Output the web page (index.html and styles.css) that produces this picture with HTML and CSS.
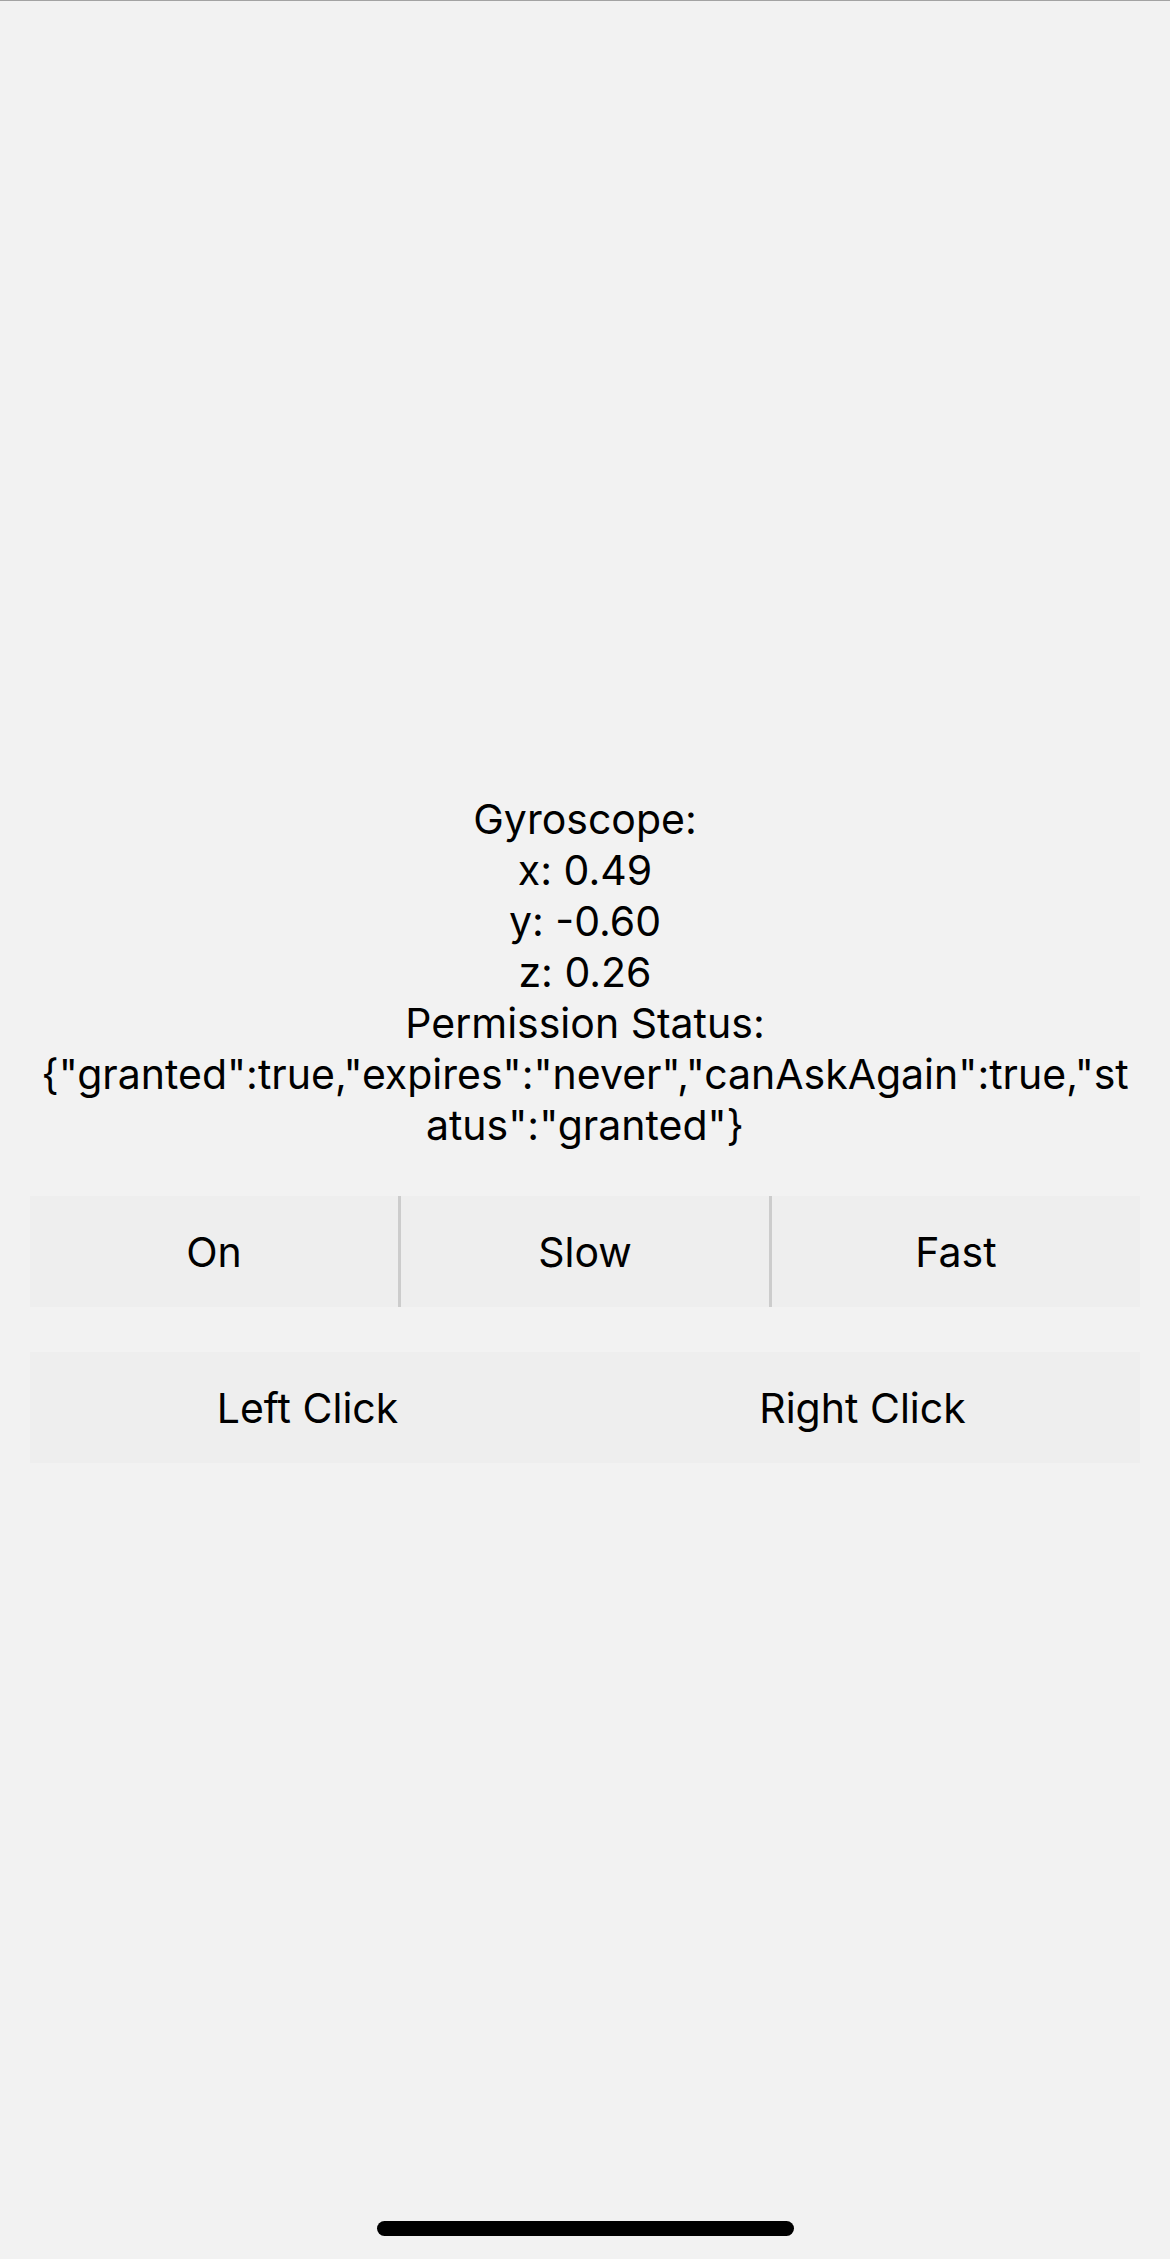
FILE: index.html
```html
<!DOCTYPE html>
<html lang="en">
<head>
<meta charset="utf-8">
<title>Gyroscope</title>
<link rel="stylesheet" href="styles.css">
</head>
<body>
<div class="screen">
  <main class="content">
    <div class="readout">
      <div class="line">Gyroscope:</div>
      <div class="line">x: 0.49</div>
      <div class="line">y: -0.60</div>
      <div class="line">z: 0.26</div>
      <div class="line">Permission Status:</div>
      <div class="line">{"granted":true,"expires":"never","canAskAgain":true,"st</div>
      <div class="line">atus":"granted"}</div>
    </div>
    <div class="btn-row">
      <button class="btn">On</button>
      <div class="divider"></div>
      <button class="btn">Slow</button>
      <div class="divider"></div>
      <button class="btn">Fast</button>
    </div>
    <div class="btn-row btn-row-2">
      <button class="btn">Left Click</button>
      <button class="btn">Right Click</button>
    </div>
  </main>
  <div class="home-indicator"></div>
</div>
</body>
</html>
```
FILE: styles.css
```css
html, body {
  margin: 0;
  padding: 0;
}
body {
  background: #f2f2f2;
  font-family: Inter, "Noto Sans", "Liberation Sans", sans-serif;
  color: #000;
}
.screen {
  height: 2259px;
  box-sizing: border-box;
  border-top: 1px solid #a3a3a3;
  display: flex;
  flex-direction: column;
  position: relative;
}
.content {
  flex: 1;
  display: flex;
  flex-direction: column;
  justify-content: center;
  padding: 0 30px 3px;
}
.readout {
  text-align: center;
  font-size: 41px;
  line-height: 51px;
  margin-bottom: 45px;
}
.line {
  white-space: nowrap;
}
.btn-row {
  display: flex;
  height: 111px;
  background: #eeeeee;
}
.btn-row-2 {
  margin-top: 45px;
}
.btn {
  flex: 1;
  border: 0;
  background: transparent;
  font-family: inherit;
  font-size: 41px;
  color: #000;
  padding: 0;
}
.divider {
  width: 3px;
  background: #cccccc;
}
.home-indicator {
  position: absolute;
  left: 377px;
  top: 2220px;
  width: 417px;
  height: 15px;
  border-radius: 8px;
  background: #000;
}
```
